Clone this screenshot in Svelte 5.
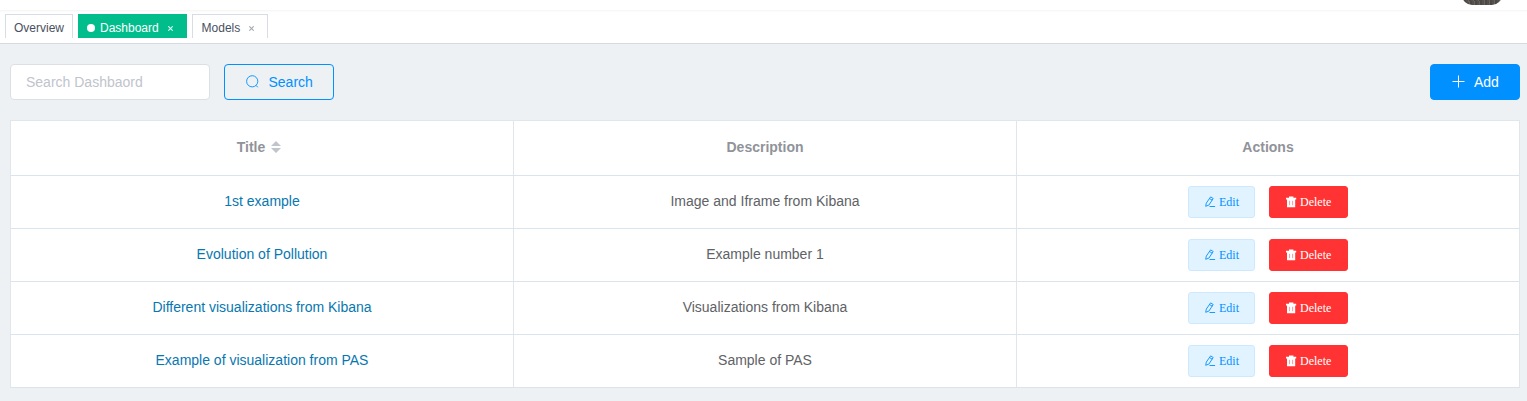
<script>
  const tabs = [
    { label: 'Overview', width: 68 },
    { label: 'Dashboard', width: 109, active: true, closable: true },
    { label: 'Models', width: 76, closable: true }
  ];
  const rows = [
    { title: '1st example', description: 'Image and Iframe from Kibana' },
    { title: 'Evolution of Pollution', description: 'Example number 1' },
    { title: 'Different visualizations from Kibana', description: 'Visualizations from Kibana' },
    { title: 'Example of visualization from PAS', description: 'Sample of PAS' }
  ];
</script>

<div class="page">
  <header><span class="avatar"></span></header>
  <nav>
    {#each tabs as tab}
      <a class="tab" class:active={tab.active} style:width="{tab.width}px">
        {#if tab.active}<i class="dot"></i>{/if}
        <span>{tab.label}</span>
        {#if tab.closable}
          <svg class="close" width="5" height="5" viewBox="0 0 5 5"><path d="M.3.3l4.4 4.4M4.7.3L.3 4.7" /></svg>
        {/if}
      </a>
    {/each}
  </nav>
  <main>
    <div class="toolbar">
      <input placeholder="Search Dashbaord" />
      <button class="search">
        <svg width="14" height="14" viewBox="0 0 14 14"><circle cx="7.2" cy="6.3" r="5.6" /><path d="M11 10.3l1.8 2" /></svg>
        <span>Search</span>
      </button>
      <button class="add">
        <svg width="14" height="14" viewBox="0 0 14 14"><path d="M1.5 6.5h12M7.5 .5v12" /></svg>
        <span>Add</span>
      </button>
    </div>
    <div class="table">
      <div class="row head">
        <div>Title
          <svg class="sort" width="10" height="12" viewBox="0 0 10 12"><path d="M5 0l5 5H0zM0 7h10l-5 5z" /></svg>
        </div>
        <div>Description</div>
        <div>Actions</div>
      </div>
      {#each rows as row}
        <div class="row">
          <div><a class="link">{row.title}</a></div>
          <div>{row.description}</div>
          <div class="actions">
            <button class="edit">
              <svg width="12" height="12" viewBox="0 0 12 12"><path d="M6.6.9l2.6 1.6-4.3 6.6-3.2 1.2.6-3.2zM5.6 2.6L8.2 4.2M5.5 10.5h5.6" /></svg>
              <span>Edit</span>
            </button>
            <button class="delete">
              <svg width="12" height="12" viewBox="0 0 12 12">
                <path class="solid" d="M4 .5h4.4v1.3h2.8v1.6H1V1.8h3zM2 3.4h8.2v7.8H2z" />
                <path class="slots" d="M4.6 4.8v4.4M7.6 4.8v4.4" />
              </svg>
              <span>Delete</span>
            </button>
          </div>
        </div>
      {/each}
    </div>
  </main>
</div>

<style>
  .page {
    height: 401px;
    overflow: hidden;
    background: #edf1f4;
    font-family: "Liberation Sans", Arial, sans-serif;
    font-size: 14px;
    color: #606266;
  }
  header {
    height: 10px;
    background: #fff;
    display: flex;
    justify-content: flex-end;
    align-items: flex-end;
    box-sizing: border-box;
    padding: 0 25px 5px 0;
  }
  .avatar {
    width: 40px;
    height: 40px;
    border-radius: 10px;
    background: repeating-linear-gradient(80deg, #55504a 0 2px, #6b6358 2px 3px, #48474a 3px 5px);
  }
  nav {
    height: 34px;
    box-sizing: border-box;
    display: flex;
    gap: 5px;
    padding: 4px 5px 0;
    background: linear-gradient(#f5f5f5, #fdfdfd 2px, #fff 3px);
    border-bottom: 1px solid #d4dae2;
  }
  .tab {
    height: 24px;
    box-sizing: border-box;
    display: flex;
    align-items: center;
    border: 1px solid #d8dce5;
    border-bottom: 0;
    padding: 3px 8px 0;
    font-size: 12px;
    color: #495060;
    background: #fff;
  }
  .active {
    background: #00bd8b;
    border-color: #00bd8b;
    color: #fff;
  }
  .tab:last-child { padding-left: 8.6px; }
  .dot {
    width: 8px;
    height: 8px;
    border-radius: 50%;
    background: #fff;
    margin-right: 5px;
  }
  .close {
    margin: 0 0 0 9px;
    fill: none;
    stroke: #a5a9b1;
    stroke-width: 1.1;
  }
  .active .close { stroke: #d9fff3; }
  main { padding: 20px 7px 0 10px; }
  .toolbar {
    display: flex;
    height: 36px;
    margin-bottom: 20px;
  }
  input {
    width: 200px;
    box-sizing: border-box;
    border: 1px solid #dcdfe6;
    border-radius: 4px;
    padding: 0 15px;
    margin: 0 14px 0 0;
    font: inherit;
    background: #fff;
  }
  input::placeholder { color: #c0c4cc; opacity: 1; }
  button {
    display: flex;
    align-items: center;
    box-sizing: border-box;
    margin: 0;
    font: inherit;
    border: 1px solid;
    border-radius: 4px;
  }
  button svg { fill: none; stroke: currentColor; }
  .search {
    width: 110px;
    padding: 0 20px;
    gap: 9.5px;
    color: #0090ff;
    background: transparent;
  }
  .search svg { stroke-width: .9; }
  .add {
    width: 90px;
    padding: 0 20px;
    gap: 9px;
    margin-left: auto;
    background: #0090ff;
    border-color: #0090ff;
    color: #fff;
  }
  .table {
    border: 1px solid #dfe6ec;
    border-bottom: 0;
    background: #fff;
  }
  .row {
    height: 53px;
    box-sizing: border-box;
    display: grid;
    grid-template-columns: 503px 503px 1fr;
    border-bottom: 1px solid #dae4ed;
  }
  .row > div {
    display: flex;
    align-items: center;
    justify-content: center;
    border-right: 1px solid #dfe6ec;
    padding-bottom: 2px;
  }
  .row > div:last-child { border-right: 0; }
  .head { height: 55px; color: #909399; font-weight: bold; }
  .sort { fill: #c0c4cc; margin: 0 6px 0 6px; }
  .link { color: #0877b0; }
  .row > .actions { gap: 14px; padding: 0; }
  .actions button {
    height: 32px;
    border-radius: 3px;
    padding: 0 15px;
    gap: 3px;
    font: 12px "Liberation Serif", "Times New Roman", serif;
  }
  .edit {
    width: 67px;
    color: #0090ff;
    border-color: #cce9ff;
    background: #e1f3ff;
  }
  .edit svg { stroke-width: .9; }
  .delete {
    width: 79px;
    color: #fff;
    border-color: #ff3334;
    background: #ff3334;
  }
  .delete .solid { fill: #fff; stroke: none; }
  .delete .slots { stroke: #ff8a8c; stroke-width: .9; }
</style>
